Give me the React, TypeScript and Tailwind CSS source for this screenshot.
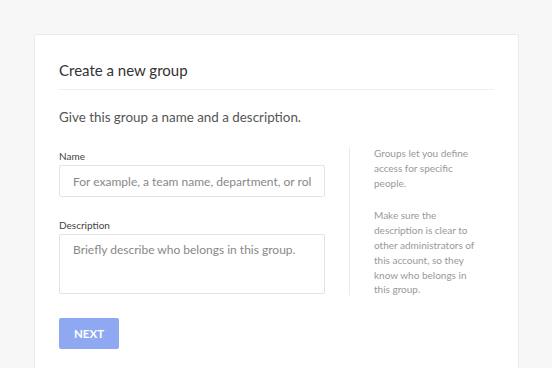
export default function App() {
  return (
    <div className="h-[368px] w-[552px] overflow-hidden bg-[#f7f7f7] font-['Lato',sans-serif]">
      <div className="ml-[34px] mt-[34px] w-[485px] rounded-[2px] border border-[#ebebeb] bg-white px-6 pb-10 pt-[25px]">
        <h1 className="border-b border-[#efefef] pb-[9px] text-[15px] leading-5 text-[#333]">
          Create a new group
        </h1>
        <p className="mt-[17px] text-[13.4px] leading-5 text-[#555]">
          Give this group a name and a description.
        </p>

        <div className="mt-5 flex">
          <div className="w-[266px] pt-[2px]">
            <label className="block text-[10px] leading-[14px] text-[#444]">Name</label>
            <input
              className="mt-[2px] block h-8 w-full rounded-[2px] border border-[#e3e3e3] px-[13px] text-[12px] text-[#555] outline-none placeholder:text-[#888]"
              placeholder="For example, a team name, department, or role"
            />
            <label className="mt-[21px] block text-[10px] leading-[14px] text-[#444]">
              Description
            </label>
            <textarea
              className="mt-[2px] block h-[60px] w-full resize-none rounded-[2px] border border-[#e3e3e3] px-[13px] py-[7px] text-[12px] leading-4 text-[#555] outline-none placeholder:text-[#888]"
              placeholder="Briefly describe who belongs in this group."
            />
            <button className="mt-6 h-[31px] w-[60px] rounded-[2px] bg-[#8fa8f2] text-[11.5px] font-bold text-white">
              NEXT
            </button>
          </div>

          <div className="ml-6 h-[148px] border-l border-[#ebebeb] pl-6 text-[10px] leading-[14.8px] text-[#999]">
            <p className="-mt-[1px] w-[106px]">Groups let you define access for specific people.</p>
            <p className="mt-[18px] w-[106px]">
              Make sure the description is clear to other administrators of this account, so they know who
              belongs in this group.
            </p>
          </div>
        </div>
      </div>
    </div>
  );
}
